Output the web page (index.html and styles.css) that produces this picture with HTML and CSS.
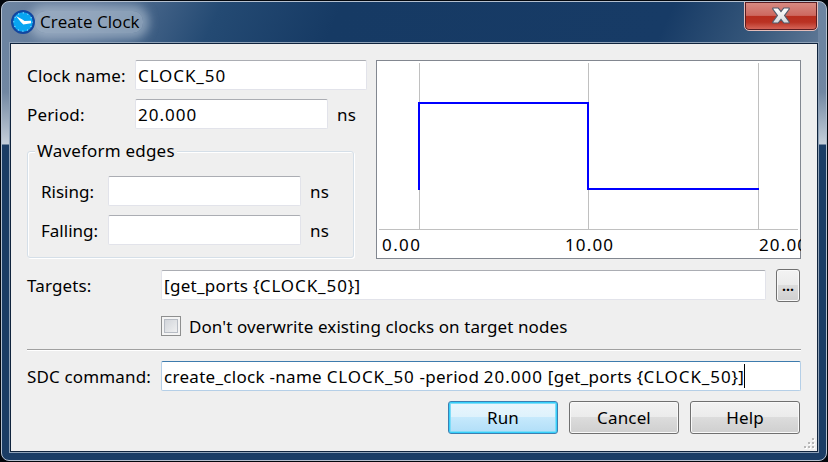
FILE: index.html
```html
<!DOCTYPE html>
<html lang="en">
<head>
<meta charset="utf-8">
<title>Create Clock</title>
<link rel="stylesheet" href="styles.css">
</head>
<body>
<main class="window">
  <header class="titlebar">
    <svg class="app-icon" width="24" height="24" viewBox="0 0 24 24">
      <circle cx="12" cy="12" r="12" fill="#1247a0"/>
      <circle cx="12" cy="12" r="9.8" fill="#08a5f1"/>
      <circle cx="12" cy="12" r="9.2" fill="none" stroke="#9be2ff" stroke-width="1.2" stroke-dasharray="1 3.817" stroke-dashoffset=".5"/>
      <path d="M5 6L11.4 9.6L13.5 11.1L20 10.8V13.2L12.3 14.6L10 12.2Z" fill="#fff"/>
    </svg>
    <h1 class="title"><span class="title-text">Create Clock</span></h1>
    <button class="close" aria-label="Close">
      <svg width="20" height="17" viewBox="0 0 20 17">
        <defs><linearGradient id="xg" x1="0" y1="0" x2="0" y2="1"><stop offset="0" stop-color="#fff"/><stop offset="1" stop-color="#d5d8dc"/></linearGradient></defs>
        <path d="M2 1H7.2L10 4.6L12.8 1H18L18.3 2L13.6 8.5L18.3 15L18 16H12.8L10 12.4L7.2 16H2L1.7 15L6.4 8.5L1.7 2Z" fill="url(#xg)" stroke="#505a6b" stroke-width="1.2"/>
      </svg>
    </button>
  </header>
  <section class="client">
    <div class="top">
      <div class="settings">
        <div class="row"><label class="name-label">Clock name:</label><div class="field name"><span class="caps">CLOCK_50</span></div></div>
        <div class="row"><label class="name-label">Period:</label><div class="field period"><span class="num">20.000</span></div><span class="unit">ns</span></div>
        <fieldset class="edges">
          <legend>Waveform edges</legend>
          <div class="row"><label class="edge-label">Rising:</label><div class="field edge"></div><span class="unit">ns</span></div>
          <div class="row"><label class="edge-label">Falling:</label><div class="field edge"></div><span class="unit">ns</span></div>
        </fieldset>
      </div>
      <svg class="graph" width="425" height="199" viewBox="0 0 425 199">
        <rect x=".5" y=".5" width="424" height="198" fill="#fff" stroke="#828790"/>
        <path d="M43.5 3V169M212.5 3V169M382.5 3V169M3 169.5H422" stroke="#c0c0c0" fill="none"/>
        <path d="M43 130V43H212V129H383" stroke="#00f" stroke-width="2" fill="none"/>
        <text x="6" y="191" textLength="38">0.00</text>
        <text x="189" y="191" textLength="48">10.00</text>
        <text x="383" y="191" textLength="48">20.00</text>
      </svg>
    </div>
    <div class="row targets"><label class="wide-label">Targets:</label><div class="field target"><span class="code">[get_ports {<span class="caps">CLOCK_50</span>}]</span></div><button class="btn more">...</button></div>
    <div class="check-row"><span class="checkbox"></span><label class="check-label">Don't overwrite existing clocks on target nodes</label></div>
    <hr>
    <div class="row"><label class="wide-label">SDC command:</label><div class="field command"><span class="code">create_clock -name <span class="caps">CLOCK_50</span> -period <span class="num">20.000</span> [get_ports {<span class="caps">CLOCK_50</span>}]</span><i class="caret"></i></div></div>
    <footer class="actions">
      <button class="btn run">Run</button><button class="btn">Cancel</button><button class="btn">Help</button>
    </footer>
    <svg class="grip" width="12" height="12" viewBox="0 0 12 12">
      <path d="M9 1h2v2h-2zM5 5h2v2h-2zM9 5h2v2h-2zM1 9h2v2h-2zM5 9h2v2h-2zM9 9h2v2h-2z" fill="#fff"/>
      <path d="M8 0h2v2h-2zM4 4h2v2h-2zM8 4h2v2h-2zM0 8h2v2h-2zM4 8h2v2h-2zM8 8h2v2h-2z" fill="#b8b8b8"/>
    </svg>
  </section>
</main>
</body>
</html>
```

FILE: styles.css
```css
* { box-sizing: border-box; }
body { margin: 0; background: #03070d; font: 17px/22px "Noto Sans", "Open Sans", sans-serif; color: #000; }
.window {
  width: 826px; height: 460px; margin: 1px; padding: 0 8px 8px;
  border: 1px solid #b4c0cf; border-radius: 8px; overflow: hidden;
  background:
    linear-gradient(#6c84a1, #6c84a1 50px, #7187a2 90px, #c5cfda 142px, #1b3d65 143px) left / 8px 100% no-repeat,
    linear-gradient(#6c84a1, #6c84a1 50px, #7187a2 90px, #c5cfda 142px, #1b3d65 143px) right / 8px 100% no-repeat,
    linear-gradient(115deg, #6e85a1 0, #60799a 80px, #244a73 200px, #163a64 310px, #173b66 610px, #345579 690px, #647c99 770px, #6d84a1 100%) top / 100% 42px no-repeat,
    #1b3d65;
}
.titlebar { height: 40px; display: flex; align-items: flex-start; padding-left: 1px; }
.app-icon { position: relative; margin-top: 8px; flex: none; }
.title { margin: 9px 0 0 0; padding: 0 5px; width: 108px; height: 22px; border-radius: 10px; background: rgba(190,204,219,.55); box-shadow: 0 0 10px 6px rgba(190,204,219,.55); font: 17px/22px "Open Sans", sans-serif; white-space: nowrap; }
.title-text { letter-spacing: .05px; }
.close { margin: -1px 0 0 auto; width: 74px; height: 30px; padding: 0 0 1px; border: 1px solid #e5bdb9; border-radius: 0 0 5px 5px; box-shadow: inset 0 0 0 1px #5a1d22; background: linear-gradient(#d88c84, #cd685f 48%, #b82d1e 50%, #ba3223 72%, #d86c60); display: flex; align-items: center; justify-content: center; }
.client { position: relative; width: 810px; height: 411px; margin-left: -1px; border: 1px solid #8ea1b7; background: #efefef; box-shadow: inset 0 0 0 1px #10243d; padding: 17px 17px 0 17px; }
.top { display: flex; height: 210px; }
.settings { width: 349px; flex: none; }
.graph { flex: none; font-size: 17px; }
.row { display: flex; height: 30px; align-items: center; white-space: nowrap; }
.row > label, .unit { padding-top: 2px; letter-spacing: .15px; }
.settings > .row { margin-bottom: 9px; }
.name-label { width: 108px; }
.row > .edge-label { width: 67px; letter-spacing: 0; }
.wide-label { width: 134px; }
.field { height: 30px; border: 1px solid #e2e3ea; border-top-color: #abadb3; border-radius: 2px; background: #fff; padding: 4px 2px 2px; display: flex; align-items: center; }
.name { width: 232px; }
.period { width: 193px; }
.edge { width: 193px; }
.target { width: 605px; }
.code { letter-spacing: .29px; white-space: pre; }
.caps { letter-spacing: .9px; }
.num { letter-spacing: 1px; }
.unit { margin-left: 9px; }
.edges { width: 327px; height: 107px; margin: 22px 0 0; padding: 24px 13px 0; border: 1px solid #d5dfe8; border-radius: 3px; box-shadow: 1px 1px #fff, inset 1px 1px #fff; position: relative; }
.edges legend { position: absolute; left: 7px; top: -12px; padding: 0 2px; background: #efefef; letter-spacing: .2px; }
.edges .row + .row { margin-top: 9px; }
.btn { font: inherit; letter-spacing: .15px; padding: 1px 0 0; width: 110px; height: 33px; border: 1px solid #707070; border-radius: 3px; box-shadow: inset 0 0 0 1px #f9f9f9; background: linear-gradient(#f3f3f3, #ebebeb 48%, #dcdcdc 50%, #cfcfcf); color: #000; }
.more { width: 24px; margin-left: 10px; flex: none; font: bold 14px/22px "Open Sans", sans-serif; letter-spacing: 0; }
.run { border-color: #3c7fb1; box-shadow: inset 0 0 0 1px #35d0fb, inset 0 0 0 2px #7fdcf8; background: linear-gradient(#eaf6fd, #def2fc 48%, #c6e9fc 50%, #b0def8); }
.check-row { display: flex; height: 22px; margin: 15px 0 0 134px; align-items: center; }
.check-label { padding-top: 2px; letter-spacing: .09px; }
.checkbox { width: 20px; height: 20px; margin-right: 8px; border: 1px solid #8e8f8f; background: linear-gradient(135deg, #cbcfd5, #f6f6f6); padding: 2px; box-shadow: inset 0 0 0 2px #f4f4f4, inset 0 0 0 3px #b7bcc4; }
hr { width: 774px; margin: 12px 0 10px; border: 0; height: 2px; background: linear-gradient(#a0a0a0 50%, #fff 50%); }
.command { width: 640px; border-color: #b5cfe7; border-top-color: #3d7bad; }
.caret { width: 1px; height: 24px; margin-top: -2px; background: #000; }
.actions { display: flex; justify-content: flex-end; gap: 11px; margin: 10px 1px 0 0; }
.grip { position: absolute; right: 2px; bottom: 2px; }
```
